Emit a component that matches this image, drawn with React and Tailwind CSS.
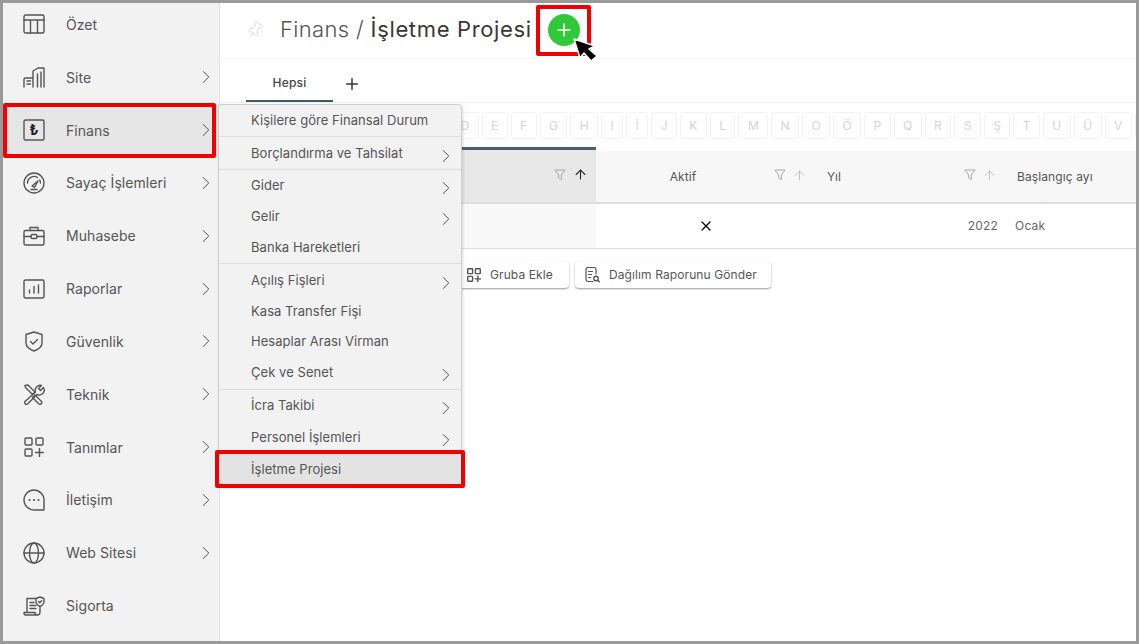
import React from "react";
import { ChevronRight, Plus, Pin, ArrowUp, X } from "lucide-react";

const s = { fill: "none", stroke: "currentColor", strokeWidth: 1.4, strokeLinecap: "round", strokeLinejoin: "round" };

const icons = {
  ozet: (
    <svg width="22" height="20" viewBox="0 0 22 20" {...s}>
      <rect x="1" y="1" width="20" height="18" rx="1.5" />
      <path d="M1 6h20M7.5 6v13M14.5 6v13" />
    </svg>
  ),
  site: (
    <svg width="22" height="21" viewBox="0 0 22 21" {...s}>
      <path d="M1 20v-8l1-1h8v9M4 14h3.500M4 17h3.500M10 11V4l5-3h6v19M14.500 7v13M18 5v15" />
    </svg>
  ),
  finans: (
    <svg width="22" height="22" viewBox="0 0 22 22" {...s}>
      <rect x="1" y="1" width="20" height="20" rx="1.500" />
      <text x="11" y="16" textAnchor="middle" fontSize="14" fontWeight="700" fill="#222" stroke="none" fontFamily="Inter, sans-serif">₺</text>
    </svg>
  ),
  sayac: (
    <svg width="22" height="22" viewBox="0 0 22 22" {...s}>
      <circle cx="11" cy="11" r="10" />
      <path d="M4.500 11a6.500 6.500 0 0 1 10-5.500M17.500 11a6.500 6.500 0 0 0-.8-3M9 14l6-5-3.500 6.500zM8 17.500h6" />
    </svg>
  ),
  muhasebe: (
    <svg width="22" height="20" viewBox="0 0 22 20" {...s}>
      <rect x="1" y="4.500" width="20" height="14.500" rx="1.500" />
      <path d="M7 4.500V1.500h8v3M1 10.500h7M14 10.500h7" />
      <rect x="8" y="8.500" width="6" height="4" rx="1.500" />
    </svg>
  ),
  raporlar: (
    <svg width="22" height="20" viewBox="0 0 22 20" {...s}>
      <rect x="1" y="1" width="20" height="18" rx="1.500" />
      <path d="M6.500 14v-3M11 14V7.500M15.500 14V6" />
    </svg>
  ),
  guvenlik: (
    <svg width="18" height="21" viewBox="0 0 18 21" {...s}>
      <path d="M9 1l8 2.500v8.500c0 4-4 6.500-8 8-4-1.500-8-4-8-8V3.500z" />
      <path d="M5.500 10.500l2.500 2.500 4.500-4.500" />
    </svg>
  ),
  teknik: (
    <svg width="22" height="21" viewBox="0 0 22 21" {...s}>
      <path d="M2 1.500l3-.5 7 7-2.500 2.500-7-7zM12 11l6.500 6.500a1.800 1.800 0 0 1-2.500 2.500L9.500 13.500z" />
      <path d="M20.500 3.500l-3 3-2-2 3-3a5 5 0 0 0-6 6.500L2 17.500a1.800 1.800 0 0 0 2.500 2.500L14 10.500a5 5 0 0 0 6.500-7z" />
    </svg>
  ),
  tanimlar: (
    <svg width="20" height="20" viewBox="0 0 20 20" {...s}>
      <rect x="1" y="1" width="7" height="7" rx="1" />
      <rect x="12" y="1" width="7" height="7" rx="1" />
      <rect x="1" y="12" width="7" height="7" rx="1" />
      <path d="M15.500 11.500v8M11.500 15.500h8" />
    </svg>
  ),
  iletisim: (
    <svg width="22" height="22" viewBox="0 0 22 22" {...s}>
      <path d="M21 21H11A10 10 0 1 1 21 11z" />
      <path d="M6.500 11h.01M11 11h.01M15.500 11h.01" strokeWidth="2.200" />
    </svg>
  ),
  web: (
    <svg width="22" height="22" viewBox="0 0 22 22" {...s}>
      <circle cx="11" cy="11" r="10" />
      <ellipse cx="11" cy="11" rx="4.500" ry="10" />
      <path d="M1 11h20" />
    </svg>
  ),
  sigorta: (
    <svg width="22" height="20" viewBox="0 0 22 20" {...s}>
      <path d="M4 16V2.500h9M17 11.500V16c0 2-1 3-2.500 3H2.500C1.500 19 1 18 1 16.500h11c0 1.500.8 2.500 2.500 2.500" />
      <path d="M7 6.500h4M7 9.500h6M7 12.500h6" />
      <path d="M17 1l4 1.500v3c0 2.500-2 4-4 5-2-1-4-2.500-4-5v-3z" />
      <path d="M15.500 5.500l1.200 1.200 2-2" />
    </svg>
  ),
};

const sideItems = [
  { key: "ozet", label: "Özet" },
  { key: "site", label: "Site", more: true },
  { key: "finans", label: "Finans", more: true, active: true },
  { key: "sayac", label: "Sayaç İşlemleri", more: true },
  { key: "muhasebe", label: "Muhasebe", more: true },
  { key: "raporlar", label: "Raporlar", more: true },
  { key: "guvenlik", label: "Güvenlik", more: true },
  { key: "teknik", label: "Teknik", more: true },
  { key: "tanimlar", label: "Tanımlar", more: true },
  { key: "iletisim", label: "İletişim", more: true },
  { key: "web", label: "Web Sitesi", more: true },
  { key: "sigorta", label: "Sigorta" },
];

const menuItems = [
  { label: "Kişilere göre Finansal Durum", h: "h-[32px]", line: true },
  { label: "Borçlandırma ve Tahsilat", h: "h-[33px]", pt: "pt-[1px]", more: true, line: true },
  { label: "Gider", h: "h-[31px]", more: true },
  { label: "Gelir", h: "h-[31px]", more: true },
  { label: "Banka Hareketleri", h: "h-[32px]", line: true },
  { label: "Açılış Fişleri", h: "h-[33px]", more: true },
  { label: "Kasa Transfer Fişi", h: "h-[30px]" },
  { label: "Hesaplar Arası Virman", h: "h-[30px]" },
  { label: "Çek ve Senet", h: "h-[33px]", more: true, line: true },
  { label: "İcra Takibi", h: "h-[32px]", more: true },
  { label: "Personel İşlemleri", h: "h-[31px]", more: true },
  { label: "İşletme Projesi", h: "h-[33px]", active: true },
];

const letters = ["D", "E", "F", "G", "H", "I", "İ", "J", "K", "L", "M", "N", "O", "Ö", "P", "Q", "R", "S", "Ş", "T", "U", "Ü", "V"];

function FilterIcon() {
  return (
    <svg width="12" height="12" viewBox="0 0 12 12" fill="none" stroke="#a8a8a8" strokeWidth="1" strokeLinejoin="round">
      <path d="M.8 1h10.400L7.300 6v4.500L4.700 9V6z" />
    </svg>
  );
}

function Sidebar() {
  return (
    <aside className="w-[217px] shrink-0 h-full bg-[#f2f2f2] border-r border-[#e2e2e2] overflow-hidden">
      <div className="-mt-[5px]">
        {sideItems.map((item) => (
          <div
            key={item.key}
            className={`relative h-[52.83px] flex items-center pl-[20px] pr-[2px] text-[#555] ${item.active ? "bg-[#e6e6e6]" : ""}`}
          >
            <div className="w-[22px] flex justify-center shrink-0">{icons[item.key]}</div>
            <span className="ml-[21px] flex-1 text-[14px] tracking-[0.06px]">{item.label}</span>
            {item.more && <ChevronRight size={22} strokeWidth={1} className="text-[#444] shrink-0" />}
            {item.active && <div className="absolute left-0 -top-[1px] -bottom-[2px] w-[213px] border-[4px] border-[#f00000] rounded-[2px]" />}
          </div>
        ))}
      </div>
    </aside>
  );
}

function FlyoutMenu() {
  return (
    <div className="absolute left-[215px] top-[101px] w-[244px] bg-[#f2f2f2] border border-[#cfcfcf] rounded-t-[4px] shadow-[1px_1px_3px_rgba(0,0,0,0.15)]">
      {menuItems.map((item) => (
        <div
          key={item.label}
          className={`relative ${item.h} ${item.pt || ""} flex items-center pl-[32px] pr-[4px] text-[13px] tracking-[0.05px] text-[#555] ${item.line ? "border-b border-[#dedede]" : ""} ${item.active ? "bg-[#e3e3e3]" : ""}`}
        >
          <span className="flex-1">{item.label}</span>
          {item.more && <ChevronRight size={22} strokeWidth={1} className="mt-[4px] text-[#444] shrink-0" />}
          {item.active && <div className="absolute -left-[4px] -right-[4px] -top-[3px] -bottom-[2px] border-[4px] border-[#f00000] rounded-[2px]" />}
        </div>
      ))}
    </div>
  );
}

function Cursor() {
  return (
    <svg className="absolute left-[568px] top-[34px]" width="32" height="30" viewBox="0 0 32 30">
      <path d="M6 5l6 19 4-5 7 8 6-5-8-7 6-3z" fill="#000" stroke="#fff" strokeWidth="1.500" strokeLinejoin="round" />
    </svg>
  );
}

function Main() {
  return (
    <main className="flex-1 min-w-0 h-full bg-white overflow-hidden">
      <div className="h-[56px] pb-[2px] border-b border-[#f5f5f5] flex items-center pl-[26px]">
        <Pin size={18} strokeWidth={1.200} className="text-[#d8d8d8] rotate-[35deg]" />
        <h1 className="ml-[16px] text-[22px] font-light tracking-[0.35px] text-[#555]">
          Finans / <span className="font-normal tracking-[0.65px] text-[#383838]">İşletme Projesi</span>
        </h1>
        <div className="relative ml-[16px] w-[32px] h-[32px] rounded-full bg-[#2fc93a] flex items-center justify-center">
          <Plus size={20} strokeWidth={2} className="text-white" />
          <div className="absolute -left-[12px] -right-[11px] -top-[9px] -bottom-[10px] border-[4px] border-[#f00000] rounded-[2px]" />
        </div>
      </div>

      <div className="h-[44px] border-b border-[#f0f0f0] flex items-stretch pl-[26px]">
        <div className="w-[87px] pt-[6px] border-b-2 border-[#3f5a62] flex items-center justify-center text-[12px] font-medium tracking-[0.2px] text-[#444]">Hepsi</div>
        <div className="ml-[10px] pt-[6px] flex items-center"><Plus size={18} strokeWidth={2} className="text-[#333]" /></div>
      </div>

      <div className="h-[44px] pt-[9px] pl-[231px] flex gap-[3px] overflow-hidden">
        {letters.map((l) => (
          <div key={l} className="shrink-0 h-[27px] px-[8.430px] border border-[#f2f2f2] rounded-[3px] flex items-center justify-center text-[12px] text-[#d4d4d4]">{l}</div>
        ))}
        <div className="shrink-0 w-[27px] h-[27px] border border-[#f2f2f2] rounded-[3px]" />
      </div>

      <div className="flex h-[57px] text-[12px] tracking-[0.1px] text-[#555]">
        <div className="w-[376px] shrink-0 border-t-[3px] border-b-2 border-t-[#45616a] border-b-[#dddddd] bg-[#e8e8e8] flex items-center justify-end gap-[7px] pr-[8px] pb-[3px]">
          <FilterIcon />
          <ArrowUp size={15} strokeWidth={1.700} className="text-[#222]" />
        </div>
        <div className="flex-1 flex flex-col">
          <div className="h-[4px] bg-white" />
          <div className="flex-1 flex bg-[#f7f7f7] border-b-2 border-[#dddddd]">
            <div className="w-[219px] shrink-0 flex items-center pr-[8px]">
              <span className="flex-1 text-center pr-[4px]">Aktif</span>
              <div className="flex items-center gap-[6px] pb-[3px]"><FilterIcon /><ArrowUp size={15} strokeWidth={1.100} className="text-[#aaa]" /></div>
            </div>
            <div className="w-[190px] shrink-0 flex items-center pl-[12px] pr-[8px]">
              <span className="flex-1">Yıl</span>
              <div className="flex items-center gap-[6px] pb-[3px]"><FilterIcon /><ArrowUp size={15} strokeWidth={1.100} className="text-[#aaa]" /></div>
            </div>
            <div className="flex-1 flex items-center pl-[12px]">Başlangıç ayı</div>
          </div>
        </div>
      </div>

      <div className="flex h-[45px] border-b border-[#dddddd] text-[12px] tracking-[0.2px] text-[#666]">
        <div className="w-[376px] shrink-0 bg-[#f9f9f9]" />
        <div className="w-[219px] shrink-0 flex items-center justify-center"><X size={16} strokeWidth={1.800} className="text-black" /></div>
        <div className="w-[190px] shrink-0 flex items-center justify-end pr-[7px]">2022</div>
        <div className="flex-1 flex items-center pl-[10px]">Ocak</div>
      </div>

      <div className="pt-[12px] pl-[230px] flex gap-[6px] text-[12px] tracking-[0.1px] text-[#555]">
        <button className="h-[27px] w-[119px] pl-[17px] flex items-center gap-[9px] bg-white rounded-[4px] shadow-[0_1px_2px_rgba(0,0,0,0.4)]">
          {React.cloneElement(icons.tanimlar, { width: 14, height: 14, strokeWidth: 2, className: "shrink-0" })}
          Gruba Ekle
        </button>
        <button className="h-[27px] w-[196px] pl-[10px] flex items-center gap-[9px] bg-white rounded-[4px] shadow-[0_1px_2px_rgba(0,0,0,0.4)]">
          <svg width="15" height="16" viewBox="0 0 15 16" {...s} strokeWidth="1.200">
            <path d="M8 14.500H3a2 2 0 0 1-2-2v-10a2 2 0 0 1 2-2h6a2 2 0 0 1 2 2V7M3.500 4.500h4M3.500 7.500h3M3.500 10.500h2" />
            <circle cx="11" cy="11.500" r="2.200" strokeWidth="1.400" />
            <path d="M12.800 13.300l1.500 1.500" strokeWidth="1.400" />
          </svg>
          Dağılım Raporunu Gönder
        </button>
      </div>
    </main>
  );
}

export default function App() {
  return (
    <div className="relative w-[1139px] h-[644px] border-[3px] border-[#9a9a9a] flex overflow-hidden font-['Inter',sans-serif] bg-white">
      <Sidebar />
      <Main />
      <FlyoutMenu />
      <div className="absolute left-[-3px] top-[-3px]"><Cursor /></div>
    </div>
  );
}
